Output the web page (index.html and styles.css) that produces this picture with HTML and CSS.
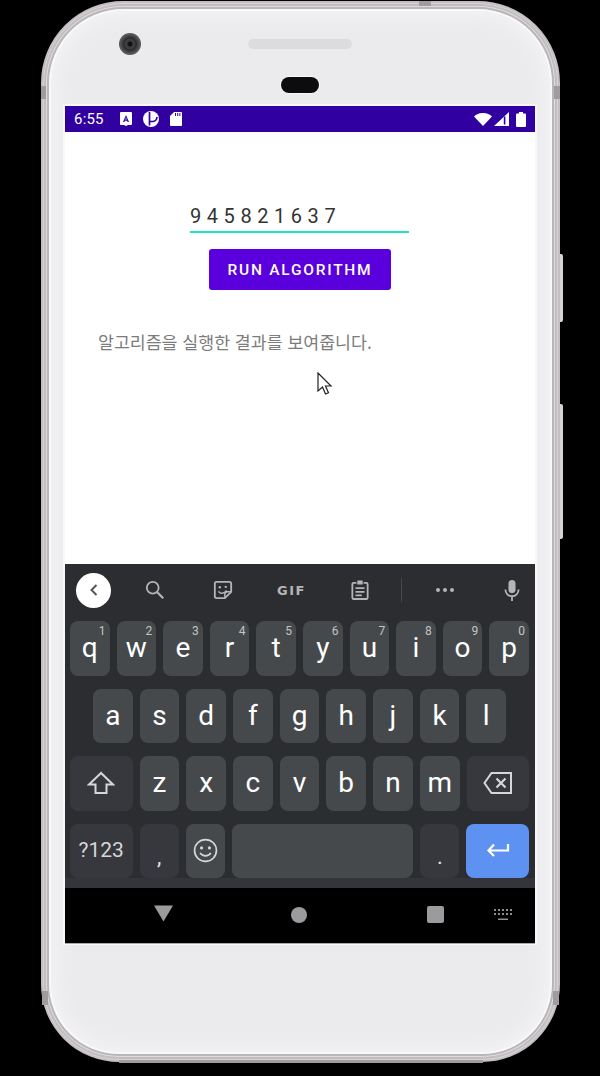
FILE: index.html
```html
<!DOCTYPE html>
<html lang="ko">
<head>
    <meta charset="UTF-8">
    <meta name="viewport" content="width=device-width, initial-scale=1.0">
    <title>Algorithm</title>
    <link rel="stylesheet" href="styles.css">
</head>
<body>
    <div class="phone">
        <span class="band band-left"></span>
        <span class="band band-right"></span>
        <span class="band band-top"></span>
        <span class="band band-bl"></span>
        <span class="band band-br"></span>
        <span class="band band-bottom"></span>
        <span class="side-btn btn-power"></span>
        <span class="side-btn btn-volume"></span>
        <div class="bezel-top">
            <span class="camera"></span>
            <span class="speaker"></span>
            <span class="sensor"></span>
        </div>
        <div class="screen">
            <div class="status-bar">
                <span class="clock">6:55</span>
                <svg class="st-a" viewBox="0 0 12 14"><path fill="#fff" d="M1 0h10a1 1 0 0 1 1 1v11a1 1 0 0 1-1 1H8l-2 1-2-1H1a1 1 0 0 1-1-1V1a1 1 0 0 1 1-1z"/><path fill="#3000a0" d="M6 3l3 7H7.600l-.5-1.300H4.900L4.400 10H3zM5.300 7.500h1.400L6 5.500z"/></svg>
                <svg class="st-p" viewBox="0 0 16 16"><circle cx="8" cy="8" r="8" fill="#fff"/><path fill="none" stroke="#3000a0" stroke-width="1.700" d="M6.500 1v13.500"/><path fill="none" stroke="#3000a0" stroke-width="1.700" d="M7 10.500h2.500a4.500 4.500 0 0 0 4.500-4.500"/></svg>
                <svg class="st-sd" viewBox="0 0 12 14"><path fill="#fff" d="M4 0h7a1 1 0 0 1 1 1v12a1 1 0 0 1-1 1H1a1 1 0 0 1-1-1V4z"/><path fill="#3000a0" d="M5 1h1v3H5zM7.200 1h1v3h-1zM9.400 1h1v3h-1z"/></svg>
                <span class="status-space"></span>
                <svg class="st-wifi" viewBox="0 0 18 13"><path fill="#fff" d="M0 3.500C5-1.200 13-1.200 18 3.500L9 13z"/></svg>
                <svg class="st-signal" viewBox="0 0 15 14"><path fill="#fff" d="M15 0v14H0z"/><path fill="#3000a0" d="M9.800 4.500h1.600v8H9.800z"/></svg>
                <svg class="st-bat" viewBox="0 0 10 15"><path fill="#fff" d="M3 0h4v1.500h2a1 1 0 0 1 1 1V14a1 1 0 0 1-1 1H1a1 1 0 0 1-1-1V2.500a1 1 0 0 1 1-1h2z"/></svg>
            </div>
            <main class="app">
                <div class="field">9 4 5 8 2 1 6 3 7</div>
                <button class="run-btn">RUN ALGORITHM</button>
                <p class="result">알고리즘을 실행한 결과를 보여줍니다.</p>
                <svg class="cursor" viewBox="0 0 16 24"><path fill="#fff" stroke="#222" stroke-width="1.200" d="M1 1v18l4.500-4 3 7 3-1.300-3-6.700H14z"/></svg>
            </main>
            <div class="keyboard">
                <div class="toolbar">
                    <span class="back"><svg viewBox="0 0 12 16"><path fill="none" stroke="#555" stroke-width="2" d="M8.500 3L3.500 8l5 5"/></svg></span>
                    <svg class="tool tool-search" viewBox="0 0 22 22"><circle cx="8.500" cy="8.500" r="6.500" fill="none" stroke="#b4b5b7" stroke-width="2"/><path stroke="#b4b5b7" stroke-width="2.400" d="M13.500 13.500L20 20"/></svg>
                    <svg class="tool tool-sticker" viewBox="0 0 22 22"><path fill="none" stroke="#b4b5b7" stroke-width="2" d="M4 2h14a2 2 0 0 1 2 2v9l-7 7H4a2 2 0 0 1-2-2V4a2 2 0 0 1 2-2z"/><path fill="none" stroke="#b4b5b7" stroke-width="1.600" d="M6 12.500c2 3 6 3 9-1M13 20v-4a3 3 0 0 1 3-3h4"/><circle cx="7.500" cy="8" r="1.300" fill="#b4b5b7"/><circle cx="14" cy="7.500" r="1.300" fill="#b4b5b7"/></svg>
                    <span class="tool-gif">GIF</span>
                    <svg class="tool tool-clip" viewBox="0 0 20 24"><path fill="none" stroke="#b4b5b7" stroke-width="2" d="M6 4H3a1.500 1.500 0 0 0-1.500 1.500v15A1.500 1.500 0 0 0 3 22h14a1.500 1.500 0 0 0 1.500-1.500v-15A1.500 1.500 0 0 0 17 4h-3"/><path fill="#b4b5b7" d="M7 1.500h6V6H7zM5 9h10v2H5zM5 13h10v2H5zM5 17h7v2H5z"/></svg>
                    <span class="tool-div"></span>
                    <span class="tool-dots"><i></i><i></i><i></i></span>
                    <svg class="tool tool-mic" viewBox="0 0 18 26"><rect x="5" y="1" width="8" height="15" rx="4" fill="#b4b5b7"/><path fill="none" stroke="#b4b5b7" stroke-width="2" d="M1.500 12a7.500 7.500 0 0 0 15 0M9 19.500V25"/></svg>
                </div>
                <div class="keys">
                    <div class="row">
                        <span class="key"><sup>1</sup>q</span>
                        <span class="key"><sup>2</sup>w</span>
                        <span class="key"><sup>3</sup>e</span>
                        <span class="key"><sup>4</sup>r</span>
                        <span class="key"><sup>5</sup>t</span>
                        <span class="key"><sup>6</sup>y</span>
                        <span class="key"><sup>7</sup>u</span>
                        <span class="key"><sup>8</sup>i</span>
                        <span class="key"><sup>9</sup>o</span>
                        <span class="key"><sup>0</sup>p</span>
                    </div>
                    <div class="row row-home">
                        <span class="key">a</span>
                        <span class="key">s</span>
                        <span class="key">d</span>
                        <span class="key">f</span>
                        <span class="key">g</span>
                        <span class="key">h</span>
                        <span class="key">j</span>
                        <span class="key">k</span>
                        <span class="key">l</span>
                    </div>
                    <div class="row">
                        <span class="key wide dark"><svg class="ic-shift" viewBox="0 0 28 24"><path fill="none" stroke="#d5d6d7" stroke-width="2" d="M14 2L2 13.500h6.500V22h11v-8.500H26z"/></svg></span>
                        <span class="key">z</span>
                        <span class="key">x</span>
                        <span class="key">c</span>
                        <span class="key">v</span>
                        <span class="key">b</span>
                        <span class="key">n</span>
                        <span class="key">m</span>
                        <span class="key wide dark"><svg class="ic-del" viewBox="0 0 30 24"><path fill="none" stroke="#d5d6d7" stroke-width="2" d="M8.500 2H28v20H8.500L1.500 12z"/><path stroke="#d5d6d7" stroke-width="2.200" d="M13.500 7.500l9 9M22.500 7.500l-9 9"/></svg></span>
                    </div>
                    <div class="row">
                        <span class="key wide dark sym">?123</span>
                        <span class="key dark punct">,</span>
                        <span class="key"><svg class="ic-emoji" viewBox="0 0 24 24"><circle cx="12" cy="12" r="10.500" fill="none" stroke="#d5d6d7" stroke-width="1.600"/><circle cx="8.200" cy="9.500" r="1.500" fill="#d5d6d7"/><circle cx="15.800" cy="9.500" r="1.500" fill="#d5d6d7"/><path fill="none" stroke="#d5d6d7" stroke-width="1.600" d="M6.800 14.500c2.500 3.500 7.900 3.500 10.400 0"/></svg></span>
                        <span class="key space"></span>
                        <span class="key dark punct">.</span>
                        <span class="key wide enter"><svg class="ic-enter" viewBox="0 0 24 14"><path fill="none" stroke="#fff" stroke-width="2.200" d="M22 1v6.500H3M8 1.500L2.500 7.500 8 13"/></svg></span>
                    </div>
                </div>
            </div>
            <div class="nav-bar">
                <svg class="nav-back" viewBox="0 0 20 17"><path fill="#9b9a9c" d="M0 0h20L10 17z"/></svg>
                <span class="nav-home"></span>
                <span class="nav-recent"></span>
                <svg class="nav-kb" viewBox="0 0 18 12"><g fill="#8f8f91"><path d="M0 0h2v2H0zM4 0h2v2H4zM8 0h2v2H8zM12 0h2v2h-2zM16 0h2v2h-2zM0 4h2v2H0zM4 4h2v2H4zM8 4h2v2H8zM12 4h2v2h-2zM16 4h2v2h-2zM4 9.500h10V11H4z"/></g></svg>
            </div>
        </div>
    </div>
</body>
</html>
```

FILE: styles.css
```css
* {
    box-sizing: border-box;
}
html, body {
    height: 100%;
}
body {
    margin: 0;
    background-color: #000;
    font-family: Roboto, "Noto Sans CJK KR", sans-serif;
    overflow: hidden;
}

/* device frame */
.phone {
    position: relative;
    width: 519px;
    height: 1061px;
    margin: 1px 0 0 41px;
    padding: 0 23px 0 22px;
    border: 2px solid #c4bfc2;
    border-radius: 82px 82px 78px 78px / 82px 82px 78px 78px;
    background-color: #ebebed;
    box-shadow: inset 0 0 0 1px #d6d3d5, inset 0 0 0 3px #c2bec0, inset 0 0 0 4px #dedbdd, inset 0 0 0 6px #b9b5b8, inset 0 0 0 8px #f8f8fa, inset 0 0 20px 12px #f4f4f6;
}
.band {
    position: absolute;
    background-color: #a09c9e;
}
.band-left {
    left: -2px;
    top: 83px;
    width: 5px;
    height: 13px;
}
.band-right {
    right: -2px;
    top: 83px;
    width: 6px;
    height: 13px;
}
.band-top {
    left: 376px;
    top: -2px;
    width: 12px;
    height: 5px;
}
.band-bl {
    left: -1px;
    top: 988px;
    width: 6px;
    height: 14px;
}
.band-br {
    right: -1px;
    top: 988px;
    width: 6px;
    height: 14px;
}
.band-bottom {
    left: 76px;
    bottom: -3px;
    width: 364px;
    height: 3px;
}
.side-btn {
    position: absolute;
    right: -5px;
    width: 3px;
    background-color: #d6d3d5;
    border-radius: 0 2px 2px 0;
}
.btn-power {
    top: 251px;
    height: 68px;
}
.btn-volume {
    top: 401px;
    height: 135px;
}

.bezel-top {
    position: relative;
    height: 103px;
    padding-top: 36px;
    display: flex;
    flex-direction: column;
    align-items: center;
}
.camera {
    position: absolute;
    left: 54px;
    top: 30px;
    width: 22px;
    height: 22px;
    border-radius: 50%;
    background: radial-gradient(circle, #111 0 2px, #3d3d3f 3px 5px, #2b2b2d 6px, #59595b 10px);
}
.speaker {
    width: 104px;
    height: 10px;
    border-radius: 5px;
    background-color: #dcdcde;
}
.sensor {
    width: 38px;
    height: 16px;
    margin-top: 28px;
    border-radius: 8px;
    background-color: #0c0c0e;
    box-shadow: 0 0 0 1px #f8f8f9;
}

.screen {
    width: 470px;
    height: 837px;
    display: flex;
    flex-direction: column;
    background-color: #fff;
    box-shadow: 0 1px 0 #a8a8aa, 0 0 0 2px #f8f8fa;
}

/* status bar */
.status-bar {
    height: 26px;
    flex: none;
    display: flex;
    align-items: center;
    padding: 0 9px 0 9px;
    background-color: #3000a0;
    color: #fff;
}
.clock {
    width: 46px;
    font-size: 15px;
    letter-spacing: 0.2px;
}
.status-bar svg {
    display: block;
    flex: none;
}
.st-a {
    width: 12px;
    height: 14px;
    margin-right: 11px;
}
.st-p {
    width: 16px;
    height: 16px;
    margin-right: 11px;
}
.st-sd {
    width: 12px;
    height: 14px;
}
.status-space {
    flex: 1;
}
.st-wifi {
    width: 18px;
    height: 13px;
    margin-right: 2px;
}
.st-signal {
    width: 15px;
    height: 14px;
    margin-right: 7px;
}
.st-bat {
    width: 10px;
    height: 15px;
}

/* app content */
.app {
    position: relative;
    height: 432px;
    flex: none;
    padding-top: 72px;
}
.field {
    width: 219px;
    height: 29px;
    margin-left: 125px;
    border-bottom: 2px solid #1de5c0;
    font-size: 20px;
    line-height: 24px;
    letter-spacing: 0.3px;
    color: #333;
}
.run-btn {
    display: block;
    width: 182px;
    height: 41px;
    margin: 16px 0 0 144px;
    padding: 0;
    border: none;
    border-radius: 3px;
    background-color: #5a00dc;
    color: #fff;
    font-family: Roboto, sans-serif;
    font-size: 15.500px;
    font-weight: 500;
    letter-spacing: 1.750px;
}
.result {
    margin: 40px 0 0 33px;
    font-family: "Noto Sans CJK KR", sans-serif;
    font-size: 17.300px;
    line-height: 24px;
    color: #7c7c7c;
}
.cursor {
    position: absolute;
    left: 252px;
    top: 240px;
    width: 16px;
    height: 24px;
}

/* keyboard */
.keyboard {
    height: 324px;
    flex: none;
    background-color: #2b2d31;
    padding: 0 6px 0 5px;
    border-bottom: 10px solid #33353a;
}
.toolbar {
    height: 57px;
    padding-bottom: 5px;
    display: flex;
    align-items: center;
}
.back {
    width: 35px;
    height: 35px;
    margin-left: 6px;
    border-radius: 50%;
    background-color: #fff;
    display: flex;
    align-items: center;
    justify-content: center;
}
.back svg {
    width: 12px;
    height: 16px;
}
.tool {
    display: block;
    flex: none;
}
.tool-search {
    width: 20px;
    height: 20px;
    margin-left: 34px;
}
.tool-sticker {
    width: 20px;
    height: 20px;
    margin-left: 48px;
}
.tool-gif {
    width: 29px;
    margin-left: 44px;
    color: #b4b5b7;
    font-family: "DejaVu Sans", sans-serif;
    font-size: 13px;
    font-weight: 700;
    letter-spacing: 1.500px;
}
.tool-clip {
    width: 18px;
    height: 22px;
    margin-left: 45px;
}
.tool-div {
    width: 1px;
    height: 24px;
    margin-left: 32px;
    background-color: #44464a;
}
.tool-dots {
    display: flex;
    gap: 3px;
    margin-left: 34px;
}
.tool-dots i {
    width: 4px;
    height: 4px;
    border-radius: 50%;
    background-color: #b4b5b7;
}
.tool-mic {
    width: 16px;
    height: 23px;
    margin-left: 50px;
}
.keys {
    display: flex;
    flex-direction: column;
    gap: 13px;
}
.row {
    display: flex;
    gap: 7px;
    height: 54.500px;
}
.row-home {
    padding: 0 23px;
}
.key {
    position: relative;
    flex: 1 1 0;
    display: flex;
    align-items: center;
    justify-content: center;
    border-radius: 8px;
    background-color: #46494c;
    color: #fff;
    font-size: 28px;
    padding-bottom: 1px;
}
.key sup {
    position: absolute;
    top: 3px;
    right: 4px;
    font-size: 12px;
    line-height: 14px;
    color: #c2c3c4;
}
.wide {
    flex: 0 0 62.500px;
}
.dark {
    background-color: #36383d;
}
.sym {
    font-size: 21px;
    color: #d5d6d7;
}
.punct {
    align-items: flex-end;
    font-size: 22px;
    line-height: 30px;
    color: #e2e2e3;
    padding-bottom: 6px;
}
.space {
    flex: 0 0 181px;
}
.enter {
    background-color: #5e92f2;
}
.ic-shift {
    width: 28px;
    height: 24px;
}
.ic-del {
    width: 30px;
    height: 24px;
}
.ic-emoji {
    width: 25px;
    height: 25px;
}
.ic-enter {
    width: 24px;
    height: 14px;
}

/* nav bar */
.nav-bar {
    flex: 1;
    display: flex;
    align-items: center;
    padding-bottom: 2px;
    background-color: #000;
}
.nav-back {
    width: 19px;
    height: 17px;
    margin: 0 0 2px 89px;
}
.nav-home {
    width: 16px;
    height: 16px;
    margin-left: 118px;
    border-radius: 50%;
    background-color: #9b9a9c;
}
.nav-recent {
    width: 17px;
    height: 17px;
    margin-left: 120px;
    border-radius: 2px;
    background-color: #9b9a9c;
}
.nav-kb {
    width: 18px;
    height: 12px;
    margin-left: 50px;
}
```
